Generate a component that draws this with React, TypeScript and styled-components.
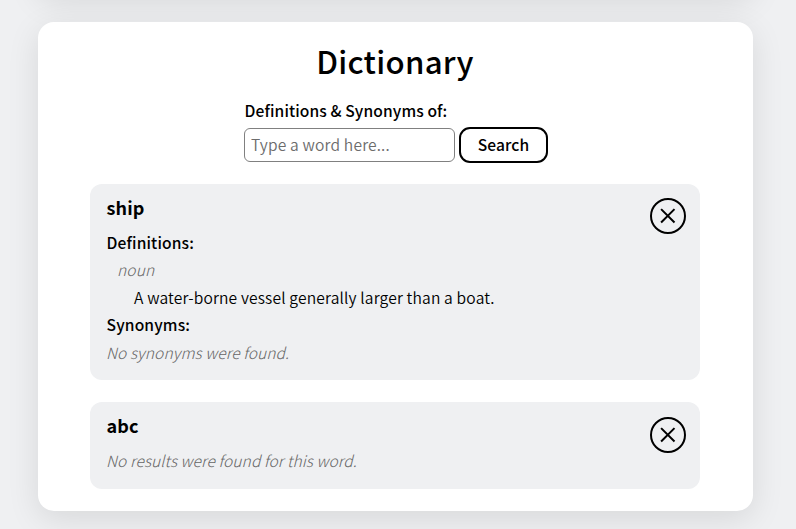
import React, { useState } from "react";
import styled, { createGlobalStyle } from "styled-components";

const GlobalStyle = createGlobalStyle`
  *, *::before, *::after { box-sizing: border-box; }
  html, body { margin: 0; height: 100%; overflow: hidden; }
  body {
    background: #eff0f2;
    color: #000;
    font-family: "Source Sans Pro", "Noto Sans CJK JP", sans-serif;
    font-size: 15.6px;
    font-weight: 300;
  }
`;

const Page = styled.div`
  display: flex;
  flex-direction: column;
  gap: 28px;
  width: 715px;
  height: 529px;
  margin-left: 38px;
`;

const Panel = styled.main`
  flex: none;
  height: 489px;
  padding: 17px 53px 0 52px;
  background: #fff;
  border-radius: 16px;
  box-shadow: 0 8px 32px rgba(0, 0, 0, 0.1);
`;

const PreviousPanel = styled.div`
  flex: none;
  height: 100px;
  margin-top: -106px;
  border-radius: 16px;
  background: #fff;
  box-shadow: 0 8px 32px rgba(0, 0, 0, 0.1);
`;

const Title = styled.h1`
  margin: 0;
  line-height: 44px;
  font-size: 31.2px;
  font-weight: 500;
  letter-spacing: 0.27px;
  text-align: center;
`;

const SearchForm = styled.form`
  width: 304px;
  margin: 13px 0 21px 154px;
`;

const Label = styled.label`
  display: block;
  padding-left: 0.6px;
  line-height: 28px;
  font-weight: 500;
  letter-spacing: 0.1px;
  white-space: nowrap;
`;

const Controls = styled.div`
  display: flex;
  align-items: center;
  gap: 4px;
  margin-top: 3px;
`;

const WordInput = styled.input`
  width: 211px;
  height: 34px;
  padding: 0 6px 2px;
  border: 1px solid #808080;
  border-radius: 6px;
  background: #fff;
  font: inherit;
  font-weight: 350;
  letter-spacing: 0.16px;
  outline: none;
  &::placeholder { color: #6c6c6c; opacity: 1; }
`;

const SearchButton = styled.button`
  width: 89px;
  height: 36px;
  padding: 0 0 2px;
  border: 2px solid #000;
  border-radius: 11px;
  background: #fff;
  color: #000;
  font: inherit;
  font-weight: 500;
  letter-spacing: 0.1px;
`;

const Results = styled.div`
  display: flex;
  flex-direction: column;
  gap: 22px;
`;

const Entry = styled.article<{ $height: number }>`
  display: flex;
  justify-content: space-between;
  height: ${(p) => p.$height}px;
  padding: 9px 14px 0 16.6px;
  border-radius: 12px;
  background: #eff0f2;
`;

const Word = styled.h2`
  margin: 0 0 7.6px;
  line-height: 28px;
  font-size: 18px;
  font-weight: 700;
  letter-spacing: 0.1px;
`;

const Section = styled.h3`
  margin: 0;
  line-height: 27.5px;
  font-size: inherit;
  font-weight: 500;
  letter-spacing: 0.12px;
`;

const Note = styled.p<{ $indent?: number }>`
  margin: 0 0 0 -0.6px;
  padding-left: ${(p) => p.$indent ?? 0}px;
  line-height: 27.5px;
  font-style: italic;
  letter-spacing: 0.07px;
  color: #666;
`;

const Meaning = styled.p`
  margin: 0;
  padding-left: 27.4px;
  line-height: 27.5px;
  font-weight: 350;
  letter-spacing: 0.155px;
`;

const CloseButton = styled.button<{ $top: number }>`
  display: grid;
  place-items: center;
  flex: none;
  width: 36px;
  height: 36px;
  margin-top: ${(p) => p.$top}px;
  padding: 0;
  border: 2px solid #000;
  border-radius: 50%;
  background: transparent;
`;

const Remove = ({ top }: { top: number }) => (
  <CloseButton type="button" aria-label="Remove" $top={top}>
    <svg width="16" height="16" viewBox="0 0 16 16" fill="none" stroke="#000" strokeWidth="2">
      <path d="M1.1 1.1 14.5 14.5M14.5 1.1 1.1 14.5" />
    </svg>
  </CloseButton>
);

export default function App() {
  const [word, setWord] = useState("");
  return (
    <>
      <GlobalStyle />
      <Page>
        <PreviousPanel />
        <Panel>
          <Title>Dictionary</Title>
          <SearchForm onSubmit={(e) => e.preventDefault()}>
            <Label htmlFor="word">Definitions &amp; Synonyms of:</Label>
            <Controls>
              <WordInput
                id="word"
                placeholder="Type a word here..."
                value={word}
                onChange={(e) => setWord(e.target.value)}
              />
              <SearchButton>Search</SearchButton>
            </Controls>
          </SearchForm>
          <Results>
            <Entry $height={196}>
              <div>
                <Word>ship</Word>
                <Section>Definitions:</Section>
                <Note $indent={11}>noun</Note>
                <Meaning>A water-borne vessel generally larger than a boat.</Meaning>
                <Section>Synonyms:</Section>
                <Note>No synonyms were found.</Note>
              </div>
              <Remove top={5} />
            </Entry>
            <Entry $height={87}>
              <div>
                <Word>abc</Word>
                <Note>No results were found for this word.</Note>
              </div>
              <Remove top={6} />
            </Entry>
          </Results>
        </Panel>
      </Page>
    </>
  );
}
